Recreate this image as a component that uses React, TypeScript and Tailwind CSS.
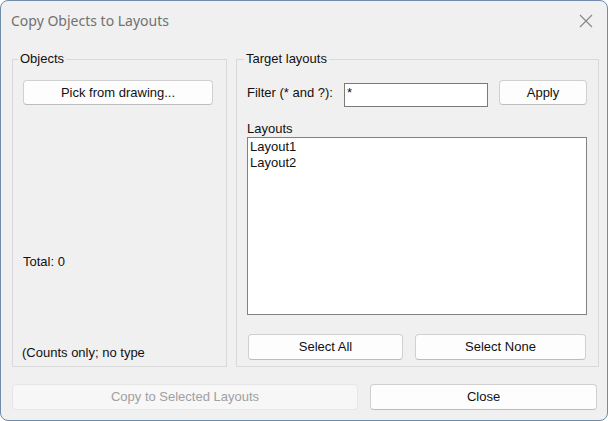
import React from "react";

const btn =
  "flex items-center justify-center bg-[#fdfdfd] border border-[#d0d0d0] border-b-[#bcbcbc] rounded-[4px] text-[13px] text-[#111111]";

export default function App() {
  return (
    <div
      className="w-[608px] h-[421px] bg-[#f0f0f0] border border-[#6f8cab] rounded-[8px] overflow-hidden flex flex-col text-[13px] leading-[16px] text-[#111111]"
      style={{ fontFamily: '"Liberation Sans", Arial, sans-serif' }}
    >
      <div className="h-[40px] shrink-0 flex items-center justify-between pl-[10px] pr-[14px]">
        <span
          className="text-[14px] text-[#707070] mt-[-1px]"
          style={{ fontFamily: '"Noto Sans", "Open Sans", sans-serif' }}
        >
          Copy Objects to Layouts
        </span>
        <svg width="14" height="14" viewBox="0 0 14 14" className="mt-[-1px]">
          <path d="M1 1 L13 13 M13 1 L1 13" stroke="#858585" strokeWidth="1.1" fill="none" />
        </svg>
      </div>
      <div className="flex gap-[9px] pl-[11px] pt-[10px]">
        <fieldset className="w-[215px] h-[316px] border border-[#d9d9d9] flex flex-col">
          <legend className="ml-[5px] px-[2px] leading-[16px]">Objects</legend>
          <button className={btn + " ml-[10px] mt-[13px] w-[190px] h-[25px]"}>
            Pick from drawing...
          </button>
          <div className="ml-[10px] mt-[149px]">Total: 0</div>
          <div className="flex-1" />
          <div className="ml-[9px] mb-[5px] whitespace-nowrap overflow-hidden">(Counts only; no type</div>
        </fieldset>
        <fieldset className="w-[363px] h-[316px] border border-[#d9d9d9] flex flex-col">
          <legend className="ml-[7px] px-[2px] leading-[16px]">Target layouts</legend>
          <div className="flex items-center mt-[13px] ml-[10px] h-[25px]">
            <span className="w-[97px]">Filter (* and ?):</span>
            <div className="w-[144px] h-[24px] mt-[5px] bg-white border border-[#7a7a7a] pl-[2px] leading-[18px]">
              *
            </div>
            <button className={btn + " ml-[11px] w-[88px] h-[25px]"}>Apply</button>
          </div>
          <div className="ml-[10px] mt-[16px]">Layouts</div>
          <div className="ml-[10px] w-[340px] h-[178px] bg-white border border-[#828282] pl-[2px] pt-[1px]">
            <div>Layout1</div>
            <div>Layout2</div>
          </div>
          <div className="flex ml-[11px] mt-[19px] gap-[12px]">
            <button className={btn + " w-[155px] h-[26px]"}>Select All</button>
            <button className={btn + " w-[171px] h-[26px]"}>Select None</button>
          </div>
        </fieldset>
      </div>
      <div className="flex pl-[11px] mt-[17px] gap-[12px]">
        <button
          disabled
          className="flex items-center justify-center w-[346px] h-[26px] bg-[#f7f7f7] border border-[#e6e6e6] rounded-[4px] text-[13px] text-[#a0a0a0]"
        >
          Copy to Selected Layouts
        </button>
        <button className={btn + " w-[227px] h-[26px]"}>Close</button>
      </div>
    </div>
  );
}
